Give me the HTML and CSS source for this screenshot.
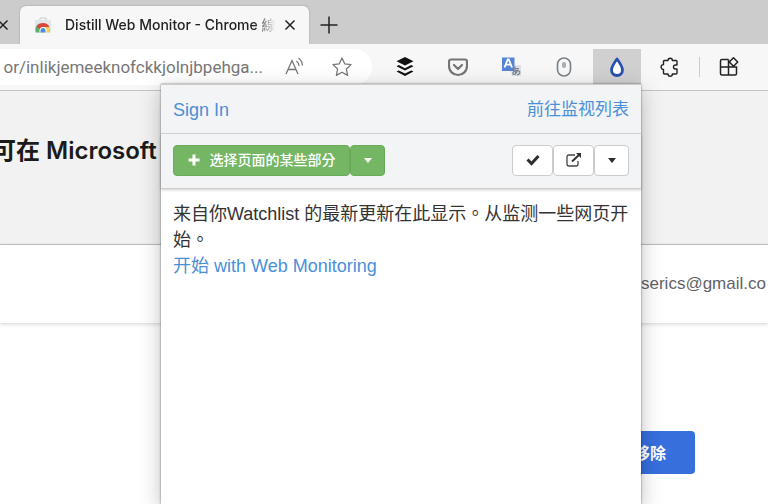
FILE: index.html
```
<!DOCTYPE html>
<html lang="zh-TW">
<head>
<meta charset="utf-8">
<meta name="viewport" content="width=device-width, initial-scale=1">
<title>Distill Web Monitor</title>
<link rel="stylesheet" href="styles.css">
</head>
<body>
<div class="browser">
  <header class="tabstrip">
    <button class="icon-btn previous-close" aria-label="Close tab"><svg width="12" height="12" viewBox="0 0 12 12"><path d="M1.500 1.500l9 9M10.500 1.500l-9 9"/></svg></button>
    <div class="tab">
      <svg class="favicon" width="16" height="16" viewBox="0 0 16 16">
        <path d="M5 3V1h6v2" stroke="#c9ccd0" stroke-width="1"/>
        <g stroke="none">
          <path d="M0 3h16v12.500H0z" fill="#e3e5e8"/>
          <path d="M1 15.500a7 7 0 0 1 3-9l4 5v4z" fill="#5fae68"/>
          <path d="M15 15.500a7 7 0 0 0-1-6H8v6z" fill="#f2cf57"/>
          <path d="M1.500 10a7 6.500 0 0 1 13 0H8l-3 2z" fill="#d9473c"/>
          <path d="M4.500 15.500v-2a3.500 3.500 0 0 1 7 0v2z" fill="#fff"/>
          <path d="M5.500 15.500v-2a2.500 2.500 0 0 1 5 0v2z" fill="#5089dc"/>
        </g>
      </svg>
      <span class="tab-title">Distill Web Monitor - Chrome 線</span>
      <button class="icon-btn" aria-label="Close tab"><svg width="12" height="12" viewBox="0 0 12 12"><path d="M1.500 1.500l9 9M10.500 1.500l-9 9"/></svg></button>
    </div>
    <button class="icon-btn new-tab" aria-label="New tab"><svg width="18" height="18" viewBox="0 0 18 18"><path d="M9 .5v17M.5 9h17"/></svg></button>
  </header>

  <nav class="toolbar" aria-label="Toolbar">
    <div class="address">
      <span class="url">or/inlikjemeeknofckkjolnjbpehga...</span>
      <button class="icon-btn" aria-label="Read aloud"><svg class="soft" width="20" height="20" viewBox="0 0 20 20"><path d="M2 17L8 3.500 14 17M4 12.500h8M12.500 4a7 7 0 0 1 2.500 5M14.500 1a10.500 10.500 0 0 1 4 7.500"/></svg></button>
      <button class="icon-btn" aria-label="Favorite"><svg class="soft" width="20" height="20" viewBox="0 0 20 20"><path stroke-linejoin="round" d="M10 1l2.700 5.800 6.300.8-4.600 4.400 1.200 6.400L10 15.300l-5.600 3.100 1.200-6.400L1 7.600l6.300-.8z"/></svg></button>
    </div>
    <div class="tools">
      <button class="tool" aria-label="Buffer"><svg width="18" height="20" viewBox="0 0 18 20"><g fill="#111" stroke="none"><path d="M9 0l8.500 4.200L9 8.400.5 4.200z"/><path d="M.5 9.200l2.300-1.100L9 11.200l6.200-3.100 2.300 1.100L9 13.500z"/><path d="M.5 14.500l2.300-1.100L9 16.500l6.200-3.100 2.300 1.100L9 19z"/></g></svg></button>
      <button class="tool" aria-label="Pocket"><svg width="20" height="20" viewBox="0 0 20 20"><path stroke="#757575" stroke-width="2.200" stroke-linejoin="round" d="M3 2.500h14q2 0 2 2V9A9 9 0 0 1 1 9V4.500q0-2 2-2z"/><path stroke="#757575" stroke-width="2.200" stroke-linecap="round" stroke-linejoin="round" d="M6 8l4 4 4-4"/></svg></button>
      <button class="tool" aria-label="Translate"><svg width="20" height="20" viewBox="0 0 20 20"><path d="M9 8h11v11H11z" fill="#dce0e5" stroke="none"/><path d="M1 .5h12.500V14H1z" fill="#5584d6" stroke="none"/><path d="M3.500 10.500l3.200-8h1.100l3.200 8M5 7.700h4.700" stroke="#fff" stroke-width="1.800"/><path stroke="#7b8794" stroke-width="1.200" d="M11 11.500h7M14 9.500q-.5 5 1 8M17 12.500c-1 4-4 5.500-5 4.500s2-4.500 5-3.500 2 4-1 4.500"/></svg></button>
      <button class="tool" aria-label="Scroll"><svg width="16" height="20" viewBox="0 0 16 20"><rect x="1.500" y="1" width="13" height="18" rx="6.500" stroke="#77838c" stroke-width="1.600"/><rect x="6" y="5" width="4" height="6" rx="2" fill="#a9adb0" stroke="none"/></svg></button>
      <button class="tool tool-active" aria-label="Distill"><svg width="16" height="20" viewBox="0 0 16 20"><path fill="#fff" stroke="#2850ae" stroke-width="2.800" stroke-linejoin="round" d="M8 2Q2.500 9.500 2.500 13a5.500 5.500 0 0 0 11 0Q13.500 9.500 8 2z"/></svg></button>
      <button class="tool" aria-label="Extensions"><svg width="20" height="20" viewBox="0 0 20 20"><path stroke-width="1.400" stroke-linejoin="round" d="M4.500 3.500H8a2.200 2.200 0 0 1 4.400 0H16q1 0 1 1V8h-1.500a2 2 0 0 0 0 4H17v4q0 1-1 1h-3.600a2.200 2.200 0 0 1-4.400 0H4.500q-1 0-1-1v-3.600a2.400 2.400 0 0 1 0-4.800V4.500q0-1 1-1z"/></svg></button>
      <span class="divider"></span>
      <button class="tool" aria-label="Apps"><svg width="20" height="20" viewBox="0 0 20 20"><path stroke-width="1.500" stroke-linejoin="round" d="M9.500 2.500H3q-1.500 0-1.500 1.500v12.500Q1.500 18 3 18h13q1.500 0 1.500-1.500V10h-16M9.500 2.500V18M14.500.8l4.200 4.200-4.200 4.200L10.300 5z"/></svg></button>
    </div>
  </nav>

  <main class="page">
    <section class="banner"><h1>可在 Microsoft</h1></section>
    <div class="account">serics@gmail.co</div>
    <div class="action"><button class="remove">移除</button></div>
  </main>

  <section class="popup" aria-label="Distill">
    <div class="popup-head">
      <a class="sign-in" href="#">Sign In</a>
      <a href="#">前往监视列表</a>
    </div>
    <div class="popup-bar">
      <div class="group">
        <button class="btn btn-green btn-label"><svg width="12" height="12" viewBox="0 0 12 12"><path stroke="#fff" stroke-width="3" d="M6 .5v11M.5 6h11"/></svg><span>选择页面的某些部分</span></button>
        <button class="btn btn-green btn-caret" aria-label="More selections"><svg width="10" height="5" viewBox="0 0 10 5"><path fill="#fff" stroke="none" d="M1 0h8L5 5z"/></svg></button>
      </div>
      <div class="group">
        <button class="btn btn-icon" aria-label="Mark read"><svg width="14" height="12" viewBox="0 0 14 12"><path stroke="#2d2d2d" stroke-width="3" d="M1.500 5.500l4 4 7-7.500"/></svg></button>
        <button class="btn btn-icon" aria-label="Open"><svg width="16" height="14" viewBox="0 0 16 14"><path stroke="#444" stroke-width="1.300" d="M9 2H3Q1 2 1 4v7q0 2 2 2h7q2 0 2-2V8"/><path stroke="#333" stroke-width="2" d="M6 8.500L13 2"/><path fill="#333" stroke="none" d="M10 0h5v5z"/></svg></button>
        <button class="btn btn-caret" aria-label="More options"><svg width="10" height="5" viewBox="0 0 10 5"><path fill="#2d2d2d" stroke="none" d="M1 0h8L5 5z"/></svg></button>
      </div>
    </div>
    <div class="popup-body">
      <p>来自你Watchlist 的最新更新在此显示。从监测一些网页开始。</p>
      <a href="#">开始 with Web Monitoring</a>
    </div>
  </section>
</div>
</body>
</html>
```
FILE: styles.css
```
* { box-sizing: border-box; }
body {
  margin: 0;
  background: #fff;
  color: #333;
  font-family: "Liberation Sans", "Noto Sans CJK TC", sans-serif;
}
button { font: inherit; border: 0; padding: 0; background: none; color: inherit; }
svg { display: block; flex: none; fill: none; stroke: #222; stroke-width: 1.5; }
a { color: #4a90d9; text-decoration: none; }
h1, p { margin: 0; }

.browser {
  position: relative;
  display: flex;
  flex-direction: column;
  min-height: 100vh;
  overflow: hidden;
}
.icon-btn { display: flex; flex: none; align-items: center; justify-content: center; }

.tabstrip {
  display: flex;
  align-items: center;
  height: 44px;
  padding-top: 6px;
  background: #ccc;
}
.previous-close { width: 20px; padding-right: 14px; }
.tab {
  display: flex;
  align-items: center;
  width: 289px;
  height: 38px;
  padding: 0 13px 0 15px;
  border-radius: 6px 6px 0 0;
  background: #f7f7f7;
  box-shadow: 0 0 2px rgba(0, 0, 0, .25);
}
.tab-title {
  flex: 1;
  min-width: 0;
  margin: 0 9px 0 14px;
  overflow: hidden;
  white-space: nowrap;
  color: #222;
  font: 500 14px/20px Inter, "Noto Sans CJK TC", sans-serif;
  -webkit-mask-image: linear-gradient(to right, #000 90%, transparent);
  mask-image: linear-gradient(to right, #000 90%, transparent);
}
.new-tab { width: 40px; }

.toolbar {
  position: relative;
  display: flex;
  align-items: center;
  gap: 9px;
  height: 47px;
  padding-right: 15px;
  border-bottom: 1px solid #c4c4c4;
  background: #f7f7f7;
}
.address {
  display: flex;
  flex: 1;
  align-items: center;
  justify-content: flex-end;
  gap: 28px;
  min-width: 0;
  height: 36px;
  padding-right: 20px;
  overflow: hidden;
  border-radius: 0 18px 18px 0;
  background: #fff;
}
.url {
  margin-right: -7px;
  color: #777;
  font: 17px/24px Roboto, sans-serif;
  white-space: nowrap;
}
.soft { stroke: #777; stroke-width: 1.3; }
.tools { display: flex; flex: none; align-items: center; gap: 5px; }
.tool { display: flex; align-items: center; justify-content: center; width: 48px; height: 36px; }
.tool-active { background: #d0d0d0; }
.divider { width: 1px; height: 20px; background: #ccc; }

.page { flex: 1; background: #fff; }
.banner {
  height: 154px;
  padding-top: 42px;
  border-bottom: 1px solid #c4c4c4;
  background: #f2f2f2;
}
.banner h1 {
  margin-left: -8px;
  color: #1b1b1b;
  font: 600 24px/36px Inter, "Noto Sans CJK TC", sans-serif;
}
.account {
  height: 78px;
  padding-left: 641px;
  overflow: hidden;
  box-shadow: 0 1px 4px rgba(0, 0, 0, .18);
  color: #5f6368;
  font-size: 17px;
  line-height: 78px;
}
.action { display: flex; justify-content: flex-end; padding: 108px 73px 0 0; }
.remove {
  height: 43px;
  padding: 0 29px 2px;
  border-radius: 4px;
  background: #376fdd;
  color: #fff;
  font: 700 16px/24px "Noto Sans CJK TC", sans-serif;
}

.popup {
  position: absolute;
  top: 84px;
  right: 127px;
  bottom: 0;
  width: 480px;
  border-top: 1px solid #ccc;
  background: #fff;
  box-shadow: 0 0 2px rgba(0, 0, 0, .5), 0 6px 20px rgba(0, 0, 0, .25);
  font-size: 18px;
  line-height: 26px;
}
.popup-head, .popup-bar {
  display: flex;
  align-items: center;
  justify-content: space-between;
  padding: 0 12px;
  background: #f2f4f6;
}
.popup-head { height: 49px; padding-top: 2px; border-bottom: 1px solid #d6d8da; }
.popup-head a { font-size: 17px; }
.popup-head .sign-in { font-size: 18px; }
.popup-bar { height: 55px; padding-bottom: 2px; border-bottom: 1px solid #ccc; box-shadow: 0 1px 3px rgba(0, 0, 0, .2); }
.group { display: flex; }
.btn {
  display: flex;
  align-items: center;
  justify-content: center;
  height: 31px;
  border: 1px solid #ccc;
  border-radius: 4px;
  background: #fff;
}
.btn-green { border-color: #69ab57; background: #74b663; color: #fff; }
.btn-label { gap: 10px; width: 177px; font-size: 14px; font-weight: 500; line-height: 20px; }
.btn-icon { width: 41px; }
.btn-caret { width: 35px; }
.popup-body { padding: 12px 12px 0; }
.popup-body a { display: block; }
```
